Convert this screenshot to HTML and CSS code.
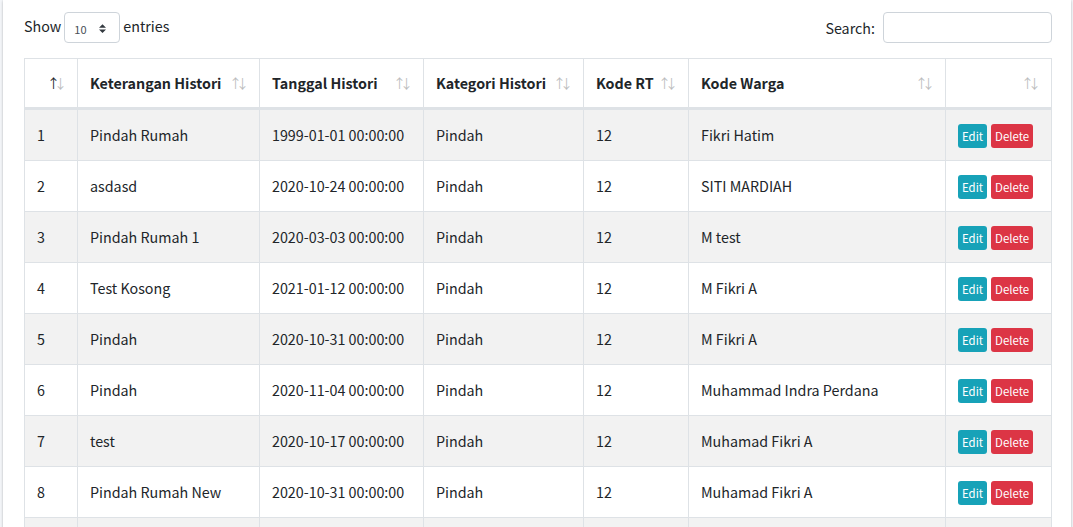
FILE: index.html
```html
<!DOCTYPE html>
<html lang="id">
<head>
<meta charset="utf-8">
<title>Histori</title>
<link rel="stylesheet" href="styles.css">
</head>
<body>
<div class="card">
  <div class="toolbar">
    <label class="length">Show
      <span class="select"><span class="select-val">10</span>
        <svg class="caret" width="8" height="10" viewBox="0 0 4 5"><path d="M2 0L0 2h4zm0 5L0 3h4z" fill="#343a40"/></svg>
      </span>
      entries</label>
    <label class="search">Search: <span class="input"></span></label>
  </div>
  <table class="grid">
    <colgroup>
      <col class="c1"><col class="c2"><col class="c3"><col class="c4"><col class="c5"><col class="c6"><col class="c7">
    </colgroup>
    <thead>
      <tr>
        <th class="sort active"></th>
        <th class="sort">Keterangan Histori</th>
        <th class="sort">Tanggal Histori</th>
        <th class="sort">Kategori Histori</th>
        <th class="sort">Kode RT</th>
        <th class="sort">Kode Warga</th>
        <th class="sort"></th>
      </tr>
    </thead>
    <tbody>
      <tr><td>1</td><td>Pindah Rumah</td><td>1999-01-01 00:00:00</td><td>Pindah</td><td>12</td><td>Fikri Hatim</td><td class="act"><span class="btn edit">Edit</span><span class="btn del">Delete</span></td></tr>
      <tr><td>2</td><td>asdasd</td><td>2020-10-24 00:00:00</td><td>Pindah</td><td>12</td><td>SITI MARDIAH</td><td class="act"><span class="btn edit">Edit</span><span class="btn del">Delete</span></td></tr>
      <tr><td>3</td><td>Pindah Rumah 1</td><td>2020-03-03 00:00:00</td><td>Pindah</td><td>12</td><td>M test</td><td class="act"><span class="btn edit">Edit</span><span class="btn del">Delete</span></td></tr>
      <tr><td>4</td><td>Test Kosong</td><td>2021-01-12 00:00:00</td><td>Pindah</td><td>12</td><td>M Fikri A</td><td class="act"><span class="btn edit">Edit</span><span class="btn del">Delete</span></td></tr>
      <tr><td>5</td><td>Pindah</td><td>2020-10-31 00:00:00</td><td>Pindah</td><td>12</td><td>M Fikri A</td><td class="act"><span class="btn edit">Edit</span><span class="btn del">Delete</span></td></tr>
      <tr><td>6</td><td>Pindah</td><td>2020-11-04 00:00:00</td><td>Pindah</td><td>12</td><td>Muhammad Indra Perdana</td><td class="act"><span class="btn edit">Edit</span><span class="btn del">Delete</span></td></tr>
      <tr><td>7</td><td>test</td><td>2020-10-17 00:00:00</td><td>Pindah</td><td>12</td><td>Muhamad Fikri A</td><td class="act"><span class="btn edit">Edit</span><span class="btn del">Delete</span></td></tr>
      <tr><td>8</td><td>Pindah Rumah New</td><td>2020-10-31 00:00:00</td><td>Pindah</td><td>12</td><td>Muhamad Fikri A</td><td class="act"><span class="btn edit">Edit</span><span class="btn del">Delete</span></td></tr>
      <tr><td>9</td><td>Pindah</td><td>2020-10-31 00:00:00</td><td>Pindah</td><td>12</td><td>M Fikri A</td><td class="act"><span class="btn edit">Edit</span><span class="btn del">Delete</span></td></tr>
    </tbody>
  </table>
</div>
</body>
</html>
```

FILE: styles.css
```css
html, body { margin: 0; padding: 0; }
body {
  background: #f4f6f9;
  font-family: "Noto Sans CJK SC", "Liberation Sans", sans-serif;
  font-size: 14.3px;
  color: #212529;
  overflow: hidden;
}
.card {
  margin: 0 2px 0 3px;
  background: #fff;
  box-shadow: 0 0 1px rgba(0,0,0,.125), 0 1px 3px rgba(0,0,0,.2);
  padding: 12px 19px 20px 21px;
  min-height: 600px;
}
.toolbar {
  display: flex;
  justify-content: space-between;
  align-items: center;
  height: 31px;
  margin-bottom: 15px;
}
.length, .search {
  display: flex;
  align-items: center;
  gap: 3px;
  line-height: 24px;
}
.length { margin-top: -3px; }
.search { gap: 8px; }
.select {
  width: 56px;
  height: 31px;
  box-sizing: border-box;
  border: 1px solid #ced4da;
  border-radius: 4px;
  display: flex;
  align-items: center;
  justify-content: space-between;
  padding: 2px 13px 0 9px;
  margin-top: 3px;
  font-size: 11px;
  color: #495057;
}
.caret { width: 7px; height: 9px; }
.input {
  display: block;
  width: 169px;
  height: 31px;
  box-sizing: border-box;
  border: 1px solid #ced4da;
  border-radius: 4px;
}
.grid {
  border-collapse: separate;
  border-spacing: 0;
  table-layout: fixed;
  width: 1028px;
}
.c1 { width: 53px; }
.c2 { width: 182px; }
.c3 { width: 164px; }
.c4 { width: 160px; }
.c5 { width: 105px; }
.c6 { width: 257px; }
.c7 { width: 107px; }
.grid th, .grid td {
  border-left: 1px solid #dee2e6;
  border-top: 1px solid #dee2e6;
  padding: 12px;
  line-height: 24px;
  text-align: left;
  white-space: nowrap;
  vertical-align: middle;
}
.grid th:last-child, .grid td:last-child { border-right: 1px solid #dee2e6; }
.grid th {
  font-weight: bold;
  border-bottom: 2px solid #dee2e6;
  position: relative;
  padding-bottom: 11px;
  padding-top: 11px;
  height: 26px;
}
.grid td { height: 26px; }
.grid tbody tr:nth-child(odd) td { background: #f2f2f2; }
.sort::before, .sort::after {
  position: absolute;
  top: 50%;
  transform: translateY(-50%);
  font-weight: normal;
  color: #212529;
  opacity: .3;
  font-size: 13px;
}
.sort::before { content: "\2191"; right: 17px; }
.sort::after { content: "\2193"; right: 10px; }
.sort.active::before { opacity: 1; }
.act { font-size: 0; }
.btn {
  display: inline-block;
  font-size: 11.4px;
  line-height: 24px;
  height: 24px;
  padding: 0 4px;
  border-radius: 3px;
  color: #fff;
  vertical-align: bottom;
  margin-top: 2px;
}
.btn + .btn { margin-left: 4px; }
.edit { background: #17a2b8; }
.del { background: #dc3545; }
```
